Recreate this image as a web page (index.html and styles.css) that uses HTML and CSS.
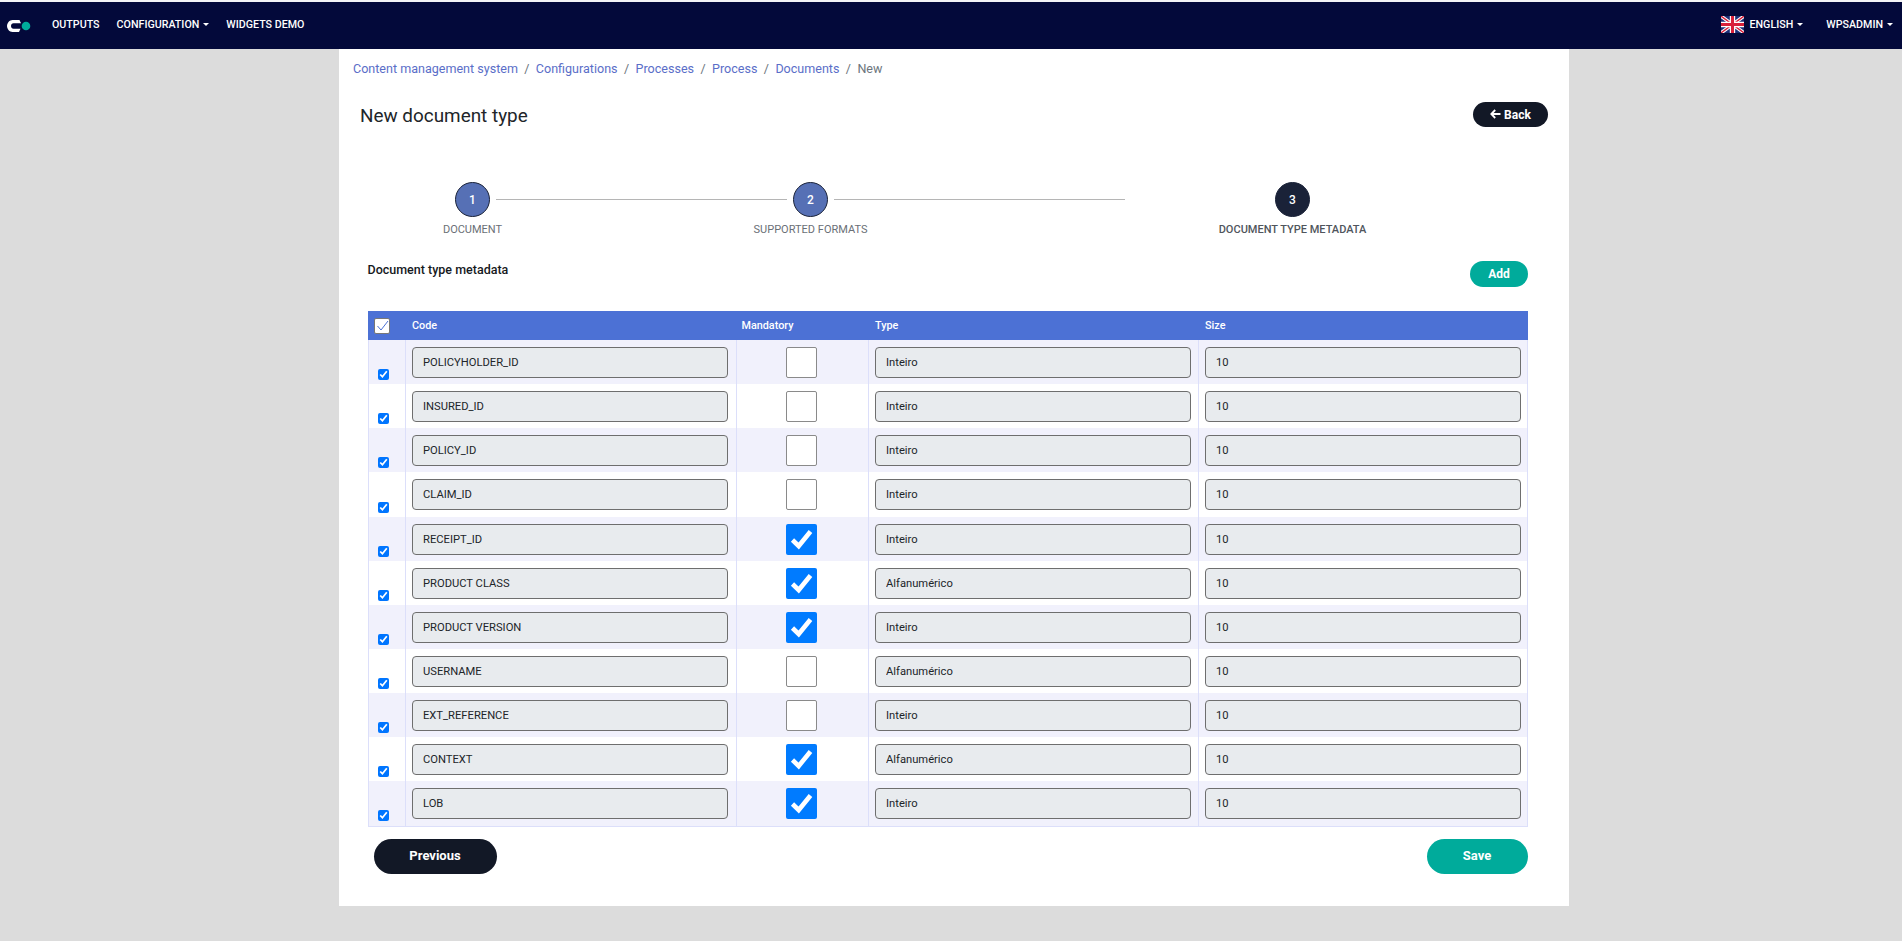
FILE: index.html
```html
<!DOCTYPE html>
<html lang="en">
<head>
<meta charset="utf-8">
<title>New document type</title>
<link rel="stylesheet" href="styles.css">
</head>
<body>
<nav class="navbar">
  <svg class="logo" width="32" height="14" viewBox="0 0 32 14" aria-hidden="true">
    <path d="M13.500 1H6.500C3.500 1 1.200 3.800 1 7c.2 3.200 2.500 6 5.500 6H13l1.500-3.200H7.500C6 9.800 5 8.500 5 7s1-2.800 2.500-2.800h7.500z" fill="#fff"/>
    <circle cx="20" cy="7" r="4.300" fill="#00ab9b"/>
  </svg>
  <a class="nav-link">OUTPUTS</a>
  <a class="nav-link">CONFIGURATION<span class="caret"></span></a>
  <a class="nav-link">WIDGETS DEMO</a>
  <div class="nav-right">
    <svg class="flag" width="23" height="17" viewBox="0 0 60 44" aria-hidden="true">
      <rect width="60" height="44" fill="#1c2f78"/>
      <path d="M0 0 60 44M60 0 0 44" stroke="#fff" stroke-width="9"/>
      <path d="M0 0 60 44M60 0 0 44" stroke="#d8203a" stroke-width="3.500"/>
      <path d="M30 0V44M0 22H60" stroke="#fff" stroke-width="14"/>
      <path d="M30 0V44M0 22H60" stroke="#d8203a" stroke-width="8"/>
    </svg>
    <a class="nav-link">ENGLISH<span class="caret"></span></a>
    <a class="nav-link user">WPSADMIN<span class="caret"></span></a>
  </div>
</nav>

<main class="page">
  <ol class="breadcrumb">
    <li><a>Content management system</a></li>
    <li><a>Configurations</a></li>
    <li><a>Processes</a></li>
    <li><a>Process</a></li>
    <li><a>Documents</a></li>
    <li class="current">New</li>
  </ol>

  <header class="title-row">
    <h1>New document type</h1>
    <button class="btn btn-back"><svg width="11" height="10" viewBox="0 0 11 10" aria-hidden="true"><path d="M10.500 5H1.500M5.200 1 1.300 5 5.200 9" fill="none" stroke="#fff" stroke-width="1.800"/></svg> Back</button>
  </header>

  <div class="stepper">
    <div class="step"><span class="circle done">1</span><span class="label">DOCUMENT</span></div>
    <span class="connector"></span>
    <div class="step"><span class="circle done">2</span><span class="label">SUPPORTED FORMATS</span></div>
    <span class="connector"></span>
    <div class="step last"><span class="circle active">3</span><span class="label strong">DOCUMENT TYPE METADATA</span></div>
  </div>

  <div class="section-row">
    <h2>Document type metadata</h2>
    <button class="btn btn-add">Add</button>
  </div>

  <table class="meta">
    <colgroup><col class="c-sel"><col class="c-code"><col class="c-man"><col class="c-type"><col class="c-size"></colgroup>
    <thead>
      <tr>
        <th><span class="head-check"><svg width="13" height="13" viewBox="0 0 13 13" aria-hidden="true"><path d="M1.500 7 5 11 12 2" fill="none" stroke="#4c71d5" stroke-width="1"/></svg></span></th>
        <th>Code</th><th>Mandatory</th><th>Type</th><th>Size</th>
      </tr>
    </thead>
    <tbody>
      <tr><td class="sel"><input type="checkbox" checked></td><td><input class="field" disabled value="POLICYHOLDER_ID"></td><td class="man"><span class="box"></span></td><td><input class="field" disabled value="Inteiro"></td><td><input class="field" disabled value="10"></td></tr>
      <tr><td class="sel"><input type="checkbox" checked></td><td><input class="field" disabled value="INSURED_ID"></td><td class="man"><span class="box"></span></td><td><input class="field" disabled value="Inteiro"></td><td><input class="field" disabled value="10"></td></tr>
      <tr><td class="sel"><input type="checkbox" checked></td><td><input class="field" disabled value="POLICY_ID"></td><td class="man"><span class="box"></span></td><td><input class="field" disabled value="Inteiro"></td><td><input class="field" disabled value="10"></td></tr>
      <tr><td class="sel"><input type="checkbox" checked></td><td><input class="field" disabled value="CLAIM_ID"></td><td class="man"><span class="box"></span></td><td><input class="field" disabled value="Inteiro"></td><td><input class="field" disabled value="10"></td></tr>
      <tr><td class="sel"><input type="checkbox" checked></td><td><input class="field" disabled value="RECEIPT_ID"></td><td class="man"><span class="box on"><svg width="31" height="31" viewBox="0 0 31 31" aria-hidden="true"><path d="M6.500 16 12.700 22 24.500 7.500" fill="none" stroke="#fff" stroke-width="4.600"/></svg></span></td><td><input class="field" disabled value="Inteiro"></td><td><input class="field" disabled value="10"></td></tr>
      <tr><td class="sel"><input type="checkbox" checked></td><td><input class="field" disabled value="PRODUCT CLASS"></td><td class="man"><span class="box on"><svg width="31" height="31" viewBox="0 0 31 31" aria-hidden="true"><path d="M6.500 16 12.700 22 24.500 7.500" fill="none" stroke="#fff" stroke-width="4.600"/></svg></span></td><td><input class="field" disabled value="Alfanumérico"></td><td><input class="field" disabled value="10"></td></tr>
      <tr><td class="sel"><input type="checkbox" checked></td><td><input class="field" disabled value="PRODUCT VERSION"></td><td class="man"><span class="box on"><svg width="31" height="31" viewBox="0 0 31 31" aria-hidden="true"><path d="M6.500 16 12.700 22 24.500 7.500" fill="none" stroke="#fff" stroke-width="4.600"/></svg></span></td><td><input class="field" disabled value="Inteiro"></td><td><input class="field" disabled value="10"></td></tr>
      <tr><td class="sel"><input type="checkbox" checked></td><td><input class="field" disabled value="USERNAME"></td><td class="man"><span class="box"></span></td><td><input class="field" disabled value="Alfanumérico"></td><td><input class="field" disabled value="10"></td></tr>
      <tr><td class="sel"><input type="checkbox" checked></td><td><input class="field" disabled value="EXT_REFERENCE"></td><td class="man"><span class="box"></span></td><td><input class="field" disabled value="Inteiro"></td><td><input class="field" disabled value="10"></td></tr>
      <tr><td class="sel"><input type="checkbox" checked></td><td><input class="field" disabled value="CONTEXT"></td><td class="man"><span class="box on"><svg width="31" height="31" viewBox="0 0 31 31" aria-hidden="true"><path d="M6.500 16 12.700 22 24.500 7.500" fill="none" stroke="#fff" stroke-width="4.600"/></svg></span></td><td><input class="field" disabled value="Alfanumérico"></td><td><input class="field" disabled value="10"></td></tr>
      <tr><td class="sel"><input type="checkbox" checked></td><td><input class="field" disabled value="LOB"></td><td class="man"><span class="box on"><svg width="31" height="31" viewBox="0 0 31 31" aria-hidden="true"><path d="M6.500 16 12.700 22 24.500 7.500" fill="none" stroke="#fff" stroke-width="4.600"/></svg></span></td><td><input class="field" disabled value="Inteiro"></td><td><input class="field" disabled value="10"></td></tr>
    </tbody>
  </table>

  <div class="actions">
    <button class="btn btn-prev">Previous</button>
    <button class="btn btn-save">Save</button>
  </div>
</main>
</body>
</html>
```

FILE: styles.css
```css
* { box-sizing: border-box; }
html, body { height: 100%; }
body {
  margin: 0;
  padding-top: 2px;
  background: #dcdcdc;
  font-family: Roboto, "Liberation Sans", sans-serif;
  color: #212529;
  overflow: hidden;
}
body::before {
  content: "";
  position: absolute;
  top: 0; left: 0; right: 0;
  height: 2px;
  background: #f4f4f6;
}

/* navbar */
.navbar {
  display: flex;
  align-items: center;
  height: 47px;
  padding: 0 9px 2px 6px;
  background: #03093a;
}
.logo { margin-right: 14px; flex: none; margin-top: 2px; }
.nav-link {
  color: #fff;
  font-size: 10.700px;
  font-weight: 500;
  margin-right: 17px;
  white-space: nowrap;
}
.caret {
  display: inline-block;
  margin-left: 4px;
  vertical-align: 2px;
  border-top: 3.500px solid #fff;
  border-left: 3.500px solid transparent;
  border-right: 3.500px solid transparent;
}
.nav-right { display: flex; align-items: center; margin-left: auto; }
.flag { margin-right: 6px; }
.nav-right .nav-link { margin-right: 23px; }
.nav-right .user { margin-right: 0; }

/* page panel */
.page {
  margin-left: 339px;
  width: 1230px;
  height: 857px;
  background: #fff;
  padding: 0 41px 0 14px;
}

.breadcrumb {
  display: flex;
  margin: 0;
  padding: 11px 0 0;
  height: 38px;
  list-style: none;
  font-size: 12.550px;
  line-height: 18px;
}
.breadcrumb a { color: #5a6ec8; }
.breadcrumb li + li::before { content: "/"; color: #6c757d; padding: 0 6.400px; }
.breadcrumb .current { color: #6c757d; }

.title-row {
  display: flex;
  justify-content: space-between;
  align-items: center;
  height: 25px;
  margin-top: 15px;
  padding-left: 7px;
}
.title-row h1 { margin: 2px 0 0; font-size: 18.900px; font-weight: 400; line-height: 25px; }

.btn {
  border: 0;
  border-radius: 20px;
  color: #fff;
  font-family: inherit;
  font-weight: 700;
  padding: 0;
  cursor: pointer;
}
.btn-back {
  width: 75px;
  height: 25px;
  margin-right: -20px;
  background: #121826;
  font-size: 12px;
}
.btn-add { width: 58px; height: 26px; background: #00ab9b; font-size: 12px; }
.btn-prev { width: 123px; height: 35px; padding-bottom: 2px; background: #121826; font-size: 13px; }
.btn-save { width: 101px; height: 35px; padding-bottom: 2px; background: #00ab9b; font-size: 13px; }

/* stepper */
.stepper {
  display: flex;
  align-items: flex-start;
  margin-top: 55px;
  padding-left: 102px;
  height: 51px;
}
.step {
  display: flex;
  flex-direction: column;
  align-items: center;
  flex: none;
  width: 35px;
}
.step.last { margin-left: 144px; }
.circle {
  flex: none;
  display: flex;
  align-items: center;
  justify-content: center;
  width: 35px;
  height: 35px;
  border-radius: 50%;
  border: 1px solid #1a2238;
  color: #fff;
  font-size: 12px;
  font-weight: 500;
}
.circle.done { background: #5670b5; }
.circle.active { background: #1a2238; }
.label {
  margin-top: 4px;
  font-size: 11px;
  line-height: 18px;
  color: #6a6f76;
  white-space: nowrap;
}
.label.strong { font-weight: 500; color: #50555c; }
.connector {
  flex: none;
  width: 291px;
  height: 1px;
  margin: 16.500px 6px 0;
  background: #b5b5b5;
}

.section-row {
  display: flex;
  justify-content: space-between;
  align-items: flex-start;
  margin-top: 28px;
  padding-left: 14.500px;
  height: 50px;
}
.section-row h2 { margin: 0; font-size: 12.500px; font-weight: 500; line-height: 18px; color: #16191d; }

/* table */
.meta {
  margin-left: 14.500px;
  width: 1160px;
  table-layout: fixed;
  border-collapse: separate;
  border-spacing: 0;
  border-bottom: 1px solid #dcdffa;
}
.c-sel { width: 37.500px; }
.c-code { width: 330.500px; }
.c-man { width: 132.500px; }
.c-type { width: 330px; }
.c-size { width: 329.500px; }
.meta thead tr { background: #4c71d5; }
.meta th {
  height: 29px;
  padding: 0 0 1px 7px;
  color: #fff;
  font-size: 10.800px;
  font-weight: 500;
  text-align: left;
  vertical-align: middle;
}
.meta th:first-child { padding: 0 0 0 6px; }
.meta th:nth-child(3) { padding-left: 6px; }
.head-check {
  display: block;
  width: 16px;
  height: 16px;
  padding: 0 0 0 1px;
  background: #fff;
  border: 1px solid #777;
  border-radius: 2px;
}
.head-check svg { display: block; }
.meta td {
  height: 44.130px;
  padding: 7px 7px 6px 6px;
  border-left: 1px solid #dcdffa;
  vertical-align: top;
}
.meta td:nth-child(2) { padding-right: 8px; }
.meta td:nth-child(5) { padding-right: 6px; border-right: 1px solid #dcdffa; }
.meta tbody tr:nth-child(odd) { background: #f1f1fc; }
.meta tbody tr:nth-child(even) { background: #fff; }
.meta tbody tr:last-child td { height: 45px; }
.meta td.sel { padding: 0 0 4px 9px; vertical-align: bottom; }
.meta tbody tr:last-child td.sel { padding-bottom: 5px; }
.sel input { display: block; width: 11px; height: 11px; margin: 0; }
.field {
  display: block;
  width: 100%;
  height: 31px;
  padding: 0 10px;
  background: #e8ebee;
  border: 1px solid #6e6e6e;
  border-radius: 4px;
  font-family: inherit;
  font-size: 11.200px;
  color: #212529;
  opacity: 1;
}
.meta td.man { text-align: center; }
.box {
  display: block;
  width: 31px;
  height: 31px;
  margin: 0 auto;
  background: #fff;
  border: 1px solid #8a8a8a;
  border-radius: 2px;
}
.box.on { background: #007bff; border: 0; }
.box svg { display: block; }

.actions {
  display: flex;
  justify-content: space-between;
  margin-top: 12px;
  margin-left: 20.500px;
  width: 1154px;
}
```
